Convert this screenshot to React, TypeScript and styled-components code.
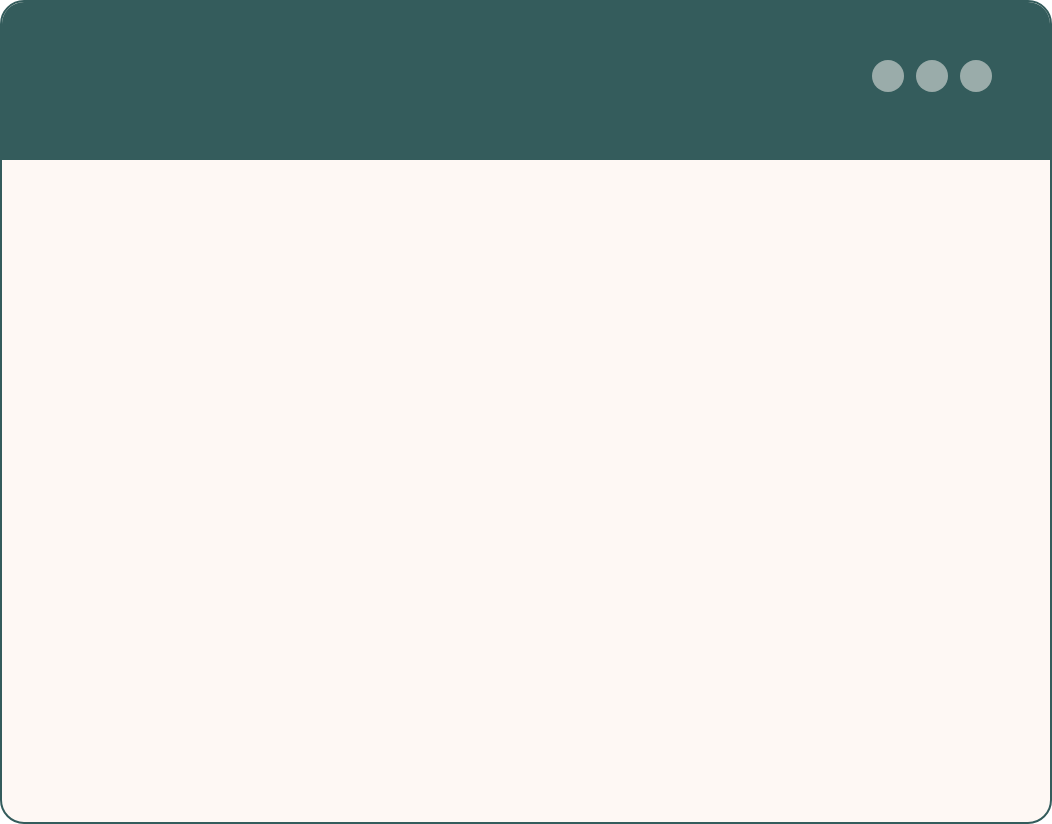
import React from 'react';
import styled, { createGlobalStyle } from 'styled-components';

const GlobalStyle = createGlobalStyle`
  html, body {
    margin: 0;
    padding: 0;
    background: #ffffff;
  }
  #root {
    width: 1052px;
    height: 824px;
  }
`;

const Window = styled.div`
  box-sizing: border-box;
  width: 1052px;
  height: 824px;
  display: flex;
  flex-direction: column;
  border: 2px solid #345c5c;
  border-radius: 24px;
  background: #fef8f4;
  overflow: hidden;
`;

const TitleBar = styled.div`
  box-sizing: border-box;
  height: 158px;
  flex: 0 0 auto;
  display: flex;
  justify-content: flex-end;
  align-items: flex-start;
  gap: 12px;
  padding: 58px 58px 0 0;
  background: #345c5c;
`;

const Dot = styled.span`
  width: 32px;
  height: 32px;
  border-radius: 50%;
  background: #9aacaa;
`;

const Body = styled.div`
  flex: 1 1 auto;
`;

export default function App() {
  return (
    <>
      <GlobalStyle />
      <Window>
        <TitleBar>
          <Dot />
          <Dot />
          <Dot />
        </TitleBar>
        <Body />
      </Window>
    </>
  );
}
